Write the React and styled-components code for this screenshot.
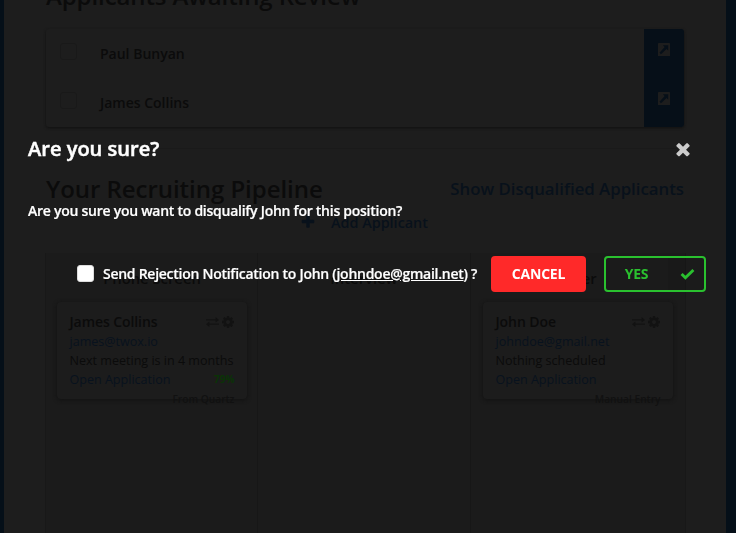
import React from 'react';
import styled, { createGlobalStyle, css } from 'styled-components';

const GlobalStyle = createGlobalStyle`
  * { box-sizing: border-box; }
  body { margin: 0; overflow: hidden; background: #050f18; font-family: "Open Sans", sans-serif; }
  h1, h2, h3, p { margin: 0; font-weight: 600; }
`;

const ICONS = {
  times: 'M1490 1322q0 40-28 68l-136 136q-28 28-68 28t-68-28l-294-294-294 294q-28 28-68 28t-68-28l-136-136q-28-28-28-68t28-68l294-294-294-294q-28-28-28-68t28-68l136-136q28-28 68-28t68 28l294 294 294-294q28-28 68-28t68 28l136 136q28 28 28 68t-28 68l-294 294 294 294q28 28 28 68z',
  plus: 'M1600 736v192q0 40-28 68t-68 28h-416v416q0 40-28 68t-68 28h-192q-40 0-68-28t-28-68v-416h-416q-40 0-68-28t-28-68v-192q0-40 28-68t68-28h416v-416q0-40 28-68t68-28h192q40 0 68 28t28 68v416h416q40 0 68 28t28 68z',
  cog: 'M1152 896q0-106-75-181t-181-75-181 75-75 181 75 181 181 75 181-75 75-181zm512-109v222q0 12-8 23t-20 13l-185 28q-19 54-39 91 35 50 107 138 10 12 10 25t-9 23q-27 37-99 108t-94 71q-12 0-26-9l-138-108q-44 23-91 38-16 136-29 186-7 28-36 28h-222q-14 0-24.5-8.5t-11.5-21.5l-28-184q-49-16-90-37l-141 107q-10 9-25 9-14 0-25-11-126-114-165-168-7-10-7-23 0-12 8-23 15-21 51-66.5t54-70.5q-27-50-41-99l-183-27q-13-2-21-12.5t-8-23.5v-222q0-12 8-23t19-13l186-28q14-46 39-92-40-57-107-138-10-12-10-24 0-10 9-23 26-36 98.5-107.5t94.5-71.5q13 0 26 10l138 107q44-23 91-38 16-136 29-186 7-28 36-28h222q14 0 24.5 8.5t11.5 21.5l28 184q49 16 90 37l142-107q9-9 24-9 13 0 25 10 129 119 165 170 7 8 7 22 0 12-8 23-15 21-51 66.5t-54 70.5q26 50 41 98l183 28q13 2 21 12.5t8 23.5z',
};

const Svg = styled.svg`
  display: block;
  flex: none;
  fill: currentColor;
`;
const Icon = ({ name, size }) => (
  <Svg width={size} height={size} viewBox="0 0 1792 1792"><path d={ICONS[name]} /></Svg>
);
const OpenIcon = () => (
  <Svg width="12" height="13" viewBox="0 0 12 13">
    <rect width="12" height="13" rx="0.6" />
    <path d="M4.8 2.2H10.2V7.6L8.5 5.9 3 11.2 1.5 9.7 6.7 4.1Z" fill="#060f18" />
  </Svg>
);
const ExchangeIcon = () => (
  <Svg width="13" height="10" viewBox="0 0 13 10">
    <path d="M0 2.2h9.6V0L13 2.9 9.6 5.6V3.6H0zM13 6.4H3.4V4.4L0 7.2 3.4 10V7.8H13z" />
  </Svg>
);
const CheckIcon = () => (
  <Svg width="15" height="12" viewBox="0 0 15 12">
    <path d="M1.6 6 5.4 9.8 13.4 2" fill="none" stroke="currentColor" strokeWidth="2.9" />
  </Svg>
);

const Page = styled.main`
  height: 533px;
  margin: 0 10px 0 4px;
  padding: 0 42px;
  background: #1d1d1d;
  color: #0b0b0b;
  overflow: hidden;
`;
const Heading = styled.h1`
  height: 29px;
  line-height: 36px;
  margin-top: ${p => p.$shift || 0}px;
  font-size: 24px;
  letter-spacing: ${p => p.$spacing || 0}px;
  white-space: nowrap;
`;
const ReviewList = styled.section`
  display: flex;
  height: 98px;
  margin-top: 22px;
  border-radius: 3px;
  box-shadow: 0 1px 3px #101010;
  overflow: hidden;
`;
const Names = styled.div`flex: 1;`;
const ReviewRow = styled.div`
  height: 49px;
  display: flex;
  align-items: center;
  padding: 0 0 0 14px;
  gap: 23px;
  font-size: 14px;
  font-weight: 600;
`;
const FaintBox = styled.span`
  width: 17px;
  height: 17px;
  margin-top: -4px;
  border: 1px solid #191919;
  border-radius: 3px;
`;
const Actions = styled.div`
  width: 40px;
  background: #060f18;
  color: #1d1d1d;
`;
const Action = styled.div`
  height: 49px;
  padding: 14px 0 0 14px;
`;
const Divider = styled.hr`
  margin: 21px 0 0;
  border: 0;
  height: 1px;
  background: #1a1a1a;
`;
const PipelineHead = styled.header`
  height: 57px;
  display: flex;
  justify-content: space-between;
  padding-top: 22px;
`;
const ShowLink = styled.a`
  font-size: 16.8px;
  font-weight: 600;
  line-height: 36px;
  color: #08111b;
`;
const AddLink = styled.div`
  display: flex;
  align-items: center;
  gap: 15px;
  height: 20px;
  margin: 6px 0 0 254px;
  font-size: 14.4px;
  font-weight: 600;
  color: #08111b;
`;
const Board = styled.section`
  display: grid;
  grid-template-columns: 211px 213px 1fr;
  height: 320px;
  margin: 21px -2px 0 -1px;
  background: #1b1b1b;
  border: solid #181818;
  border-width: 0 1px;
`;
const Column = styled.div`
  min-width: 0;
  padding: 12px 10px 0 11px;
  & + & { border-left: 1px solid #171717; padding: 12px 12px 0; }
`;
const ColumnTitle = styled.h3`
  height: 37px;
  line-height: 27px;
  font-size: 14.8px;
  text-align: center;
`;
const Card = styled.article`
  height: 97px;
  padding: 10px 12.5px 0;
  border-radius: 4px;
  background: #1c1c1c;
  box-shadow: 0 1px 4px #111;
  font-size: 12.55px;
  line-height: 19px;
  white-space: nowrap;
`;
const CardRow = styled.div`
  display: flex;
  justify-content: space-between;
  align-items: center;
  height: 19.4px;
  color: ${p => (p.$link ? '#08121e' : '#0b0b0b')};
  ${p => p.$title && css`font-size: 14px; font-weight: 600; letter-spacing: -0.08px;`}
`;
const Tools = styled.span`
  display: flex;
  align-items: center;
  gap: 2px;
  color: #121212;
`;
const Score = styled.span`
  font-size: 10px;
  font-weight: 700;
  color: #0a3306;
`;
const Source = styled.div`
  text-align: right;
  font-size: 10.2px;
  font-weight: 600;
  color: #111;
`;

const Overlay = styled.div`
  position: fixed;
  inset: 0;
  padding: 134px 30px 0 28px;
  color: #fff;
`;
const DialogHead = styled.header`
  display: flex;
  justify-content: space-between;
  align-items: center;
  height: 30px;
  padding-right: 13px;
  color: #ccc;
`;
const DialogTitle = styled.h2`
  padding-bottom: 1px;
  color: #fff;
  font-size: 20px;
  letter-spacing: 0.02px;
  -webkit-text-stroke: 0.5px #fff;
`;
const Question = styled.p`
  margin-top: 37px;
  height: 20px;
  line-height: 20px;
  font-size: 14px;
  letter-spacing: -0.26px;
  -webkit-text-stroke: 0.2px #fff;
`;
const Controls = styled.div`
  display: flex;
  align-items: center;
  margin-top: 35px;
  height: 36px;
  padding-left: 49px;
`;
const Notify = styled.label`
  display: flex;
  align-items: center;
  width: 414px;
  gap: 9px;
  padding-bottom: 2px;
  font-size: 14px;
  font-weight: 600;
  letter-spacing: -0.265px;
  -webkit-text-stroke: 0.2px #fff;
  white-space: nowrap;
`;
const Checkbox = styled.span`
  width: 17px;
  height: 17px;
  border: 1px solid #ddd;
  border-radius: 3px;
  background: #fff;
`;
const Button = styled.button`
  display: flex;
  align-items: center;
  justify-content: center;
  width: ${p => p.$width}px;
  height: 36px;
  padding: 0;
  border: 2px solid ${p => p.$color};
  border-radius: 4px;
  background: ${p => (p.$solid ? p.$color : 'transparent')};
  color: ${p => (p.$solid ? '#fff' : p.$color)};
  font: 700 14px "Open Sans", sans-serif;
  letter-spacing: -0.2px;
  & + & { margin-left: 18px; }
`;
const ButtonLabel = styled.span`
  padding-bottom: 2px;
`;
const YesLabel = styled(ButtonLabel)`
  flex: 1;
  padding-right: 1px;
  text-align: center;
`;
const YesIcon = styled.span`
  width: 36px;
  height: 32px;
  display: grid;
  place-items: center;
  padding-left: 3px;
  background: rgba(0, 0, 0, 0.06);
`;

const columns = [
  { title: 'Phone Screen', card: { name: 'James Collins', email: 'james@twox.io', status: 'Next meeting is in 4 months', score: '79%', source: 'From Quartz' } },
  { title: 'Interview' },
  { title: 'Offer', card: { name: 'John Doe', email: 'johndoe@gmail.net', status: 'Nothing scheduled', source: 'Manual Entry' } },
];

const ApplicantCard = ({ name, email, status, score, source }) => (
  <Card>
    <CardRow $title>{name}<Tools><ExchangeIcon /><Icon name="cog" size={14} /></Tools></CardRow>
    <CardRow $link>{email}</CardRow>
    <CardRow>{status}</CardRow>
    <CardRow $link>Open Application{score && <Score>{score}</Score>}</CardRow>
    <Source>{source}</Source>
  </Card>
);

export default function App() {
  return (
    <>
      <GlobalStyle />
      <Page>
        <Heading $shift={-22} $spacing={-0.1}>Applicants Awaiting Review</Heading>
        <ReviewList>
          <Names>
            {['Paul Bunyan', 'James Collins'].map(n => <ReviewRow key={n}><FaintBox />{n}</ReviewRow>)}
          </Names>
          <Actions><Action><OpenIcon /></Action><Action><OpenIcon /></Action></Actions>
        </ReviewList>
        <Divider />
        <PipelineHead>
          <Heading $spacing={-0.04}>Your Recruiting Pipeline</Heading>
          <ShowLink>Show Disqualified Applicants</ShowLink>
        </PipelineHead>
        <AddLink><Icon name="plus" size={16} />Add Applicant</AddLink>
        <Board>
          {columns.map(c => (
            <Column key={c.title}>
              <ColumnTitle>{c.title}</ColumnTitle>
              {c.card && <ApplicantCard {...c.card} />}
            </Column>
          ))}
        </Board>
      </Page>
      <Overlay role="dialog">
        <DialogHead><DialogTitle>Are you sure?</DialogTitle><Icon name="times" size={20} /></DialogHead>
        <Question>Are you sure you want to disqualify John for this position?</Question>
        <Controls>
          <Notify><Checkbox /><span>Send Rejection Notification to John (<u>johndoe@gmail.net</u>) ?</span></Notify>
          <Button $width={95} $color="#ff2929" $solid><ButtonLabel>CANCEL</ButtonLabel></Button>
          <Button $width={102} $color="#2ac12f"><YesLabel>YES</YesLabel><YesIcon><CheckIcon /></YesIcon></Button>
        </Controls>
      </Overlay>
    </>
  );
}
